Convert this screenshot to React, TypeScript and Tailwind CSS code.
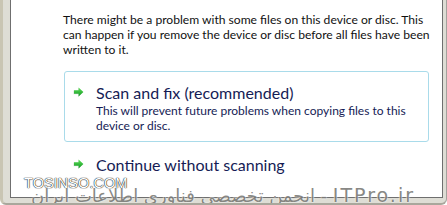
import React from "react";

function Arrow() {
  return (
    <svg width="11" height="10" viewBox="0 0 11 10" className="shrink-0">
      <defs>
        <linearGradient id="ag" x1="0" y1="0" x2="0" y2="1">
          <stop offset="0" stopColor="#62e45c" />
          <stop offset="1" stopColor="#0f9420" />
        </linearGradient>
      </defs>
      <path d="M1 3.2H5.6V0.4L10.4 5L5.6 9.6V6.8H1Z" fill="#000" opacity="0.12" transform="translate(-0.6 0.4)" />
      <path d="M1 3.2H5.6V0.4L10.4 5L5.6 9.6V6.8H1Z" fill="url(#ag)" />
    </svg>
  );
}

export default function App() {
  return (
    <div className="relative flex h-[205px] w-[447px] overflow-hidden rounded-b-[6px] border-b-2 border-l-[3px] border-r border-b-[#a9a79c] border-l-[#c9c5b3] border-r-[#a3a29c] bg-[#deddd5] pb-[5px] pl-[7px] pr-[4px] font-['Lato',sans-serif]">
      <div className="flex flex-1 flex-col border-x border-b border-[#6f6f6f] bg-white pl-[52px] pr-[12px] pt-[12px]">
        <p className="whitespace-nowrap text-[12.1px] leading-[15px] text-[#111]">
          There might be a problem with some files on this device or disc. This
          <br />
          can happen if you remove the device or disc before all files have been
          <br />
          written to it.
        </p>
        <div className="ml-[1px] mt-[14px] flex h-[71px] w-[365px] rounded-[3px] border border-[#a9dbea] pl-[8px] pt-[10px]">
          <div className="mr-[12px] mt-[5px]">
            <Arrow />
          </div>
          <div className="flex flex-col whitespace-nowrap text-[#151c55]">
            <span className="text-[16px] leading-[21px]">Scan and fix (recommended)</span>
            <span className="text-[12px] leading-[15px]">
              This will prevent future problems when copying files to this
              <br />
              device or disc.
            </span>
          </div>
        </div>
        <div className="ml-[1px] mt-[2px] flex pl-[9px] pt-[10px]">
          <div className="mr-[12px] mt-[5px]">
            <Arrow />
          </div>
          <span className="whitespace-nowrap text-[16px] leading-[21px] text-[#151c55]">Continue without scanning</span>
        </div>
      </div>
      <div className="absolute left-[21px] top-[175px] font-['Liberation_Sans',sans-serif] text-[14.6px] leading-[16px] text-white [text-shadow:0_0_1px_#000,0_0_1px_#000]">
        TOSINSO.COM
      </div>
      <div
        dir="rtl"
        className="absolute left-[30px] top-[183px] w-[382px] whitespace-nowrap font-['DejaVu_Sans',sans-serif] text-[18px] leading-[24px] text-[#7c7c78] opacity-90 [text-shadow:0_0_2px_#fff,0_0_1px_#fff]"
      >
        <span className="text-[19px] tracking-[2px]">ITPro.ir</span> - انجمن تخصصی فناوری اطلاعات ایران
      </div>
    </div>
  );
}
